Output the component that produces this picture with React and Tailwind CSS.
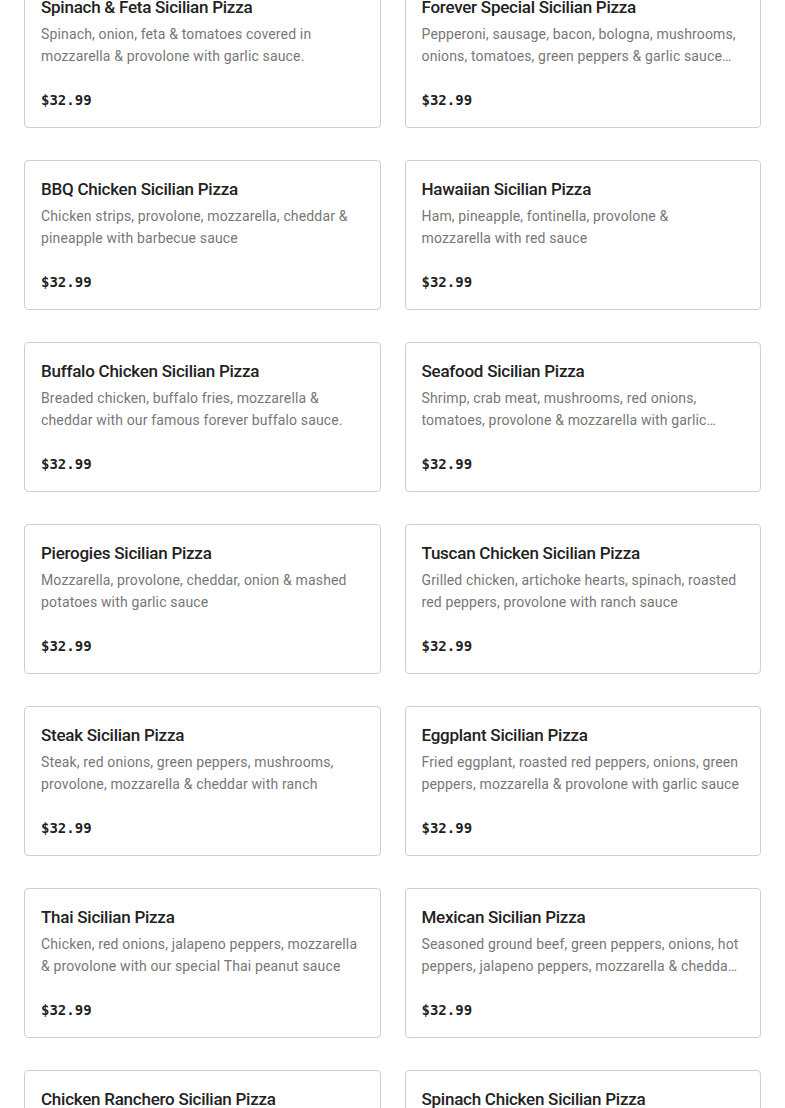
const pizzas = [
  {
    name: "Spinach & Feta Sicilian Pizza",
    desc: "Spinach, onion, feta & tomatoes covered in mozzarella & provolone with garlic sauce.",
  },
  {
    name: "Forever Special Sicilian Pizza",
    desc: "Pepperoni, sausage, bacon, bologna, mushrooms, onions, tomatoes, green peppers & garlic sauce topped with mozzarella & provolone",
  },
  {
    name: "BBQ Chicken Sicilian Pizza",
    desc: "Chicken strips, provolone, mozzarella, cheddar & pineapple with barbecue sauce",
  },
  {
    name: "Hawaiian Sicilian Pizza",
    desc: "Ham, pineapple, fontinella, provolone & mozzarella with red sauce",
  },
  {
    name: "Buffalo Chicken Sicilian Pizza",
    desc: "Breaded chicken, buffalo fries, mozzarella & cheddar with our famous forever buffalo sauce.",
  },
  {
    name: "Seafood Sicilian Pizza",
    desc: "Shrimp, crab meat, mushrooms, red onions, tomatoes, provolone & mozzarella with garlic sauce",
  },
  {
    name: "Pierogies Sicilian Pizza",
    desc: "Mozzarella, provolone, cheddar, onion & mashed potatoes with garlic sauce",
  },
  {
    name: "Tuscan Chicken Sicilian Pizza",
    desc: "Grilled chicken, artichoke hearts, spinach, roasted red peppers, provolone with ranch sauce",
  },
  {
    name: "Steak Sicilian Pizza",
    desc: "Steak, red onions, green peppers, mushrooms, provolone, mozzarella & cheddar with ranch",
  },
  {
    name: "Eggplant Sicilian Pizza",
    desc: "Fried eggplant, roasted red peppers, onions, green peppers, mozzarella & provolone with garlic sauce",
  },
  {
    name: "Thai Sicilian Pizza",
    desc: "Chicken, red onions, jalapeno peppers, mozzarella & provolone with our special Thai peanut sauce",
  },
  {
    name: "Mexican Sicilian Pizza",
    desc: "Seasoned ground beef, green peppers, onions, hot peppers, jalapeno peppers, mozzarella & cheddar with salsa",
  },
  {
    name: "Chicken Ranchero Sicilian Pizza",
    desc: "Chicken, bacon, onions, tomatoes, mozzarella & cheddar with ranch sauce",
  },
  {
    name: "Spinach Chicken Sicilian Pizza",
    desc: "Chicken, spinach, tomatoes, mozzarella & provolone with garlic sauce",
  },
];

function MenuCard({ item }) {
  return (
    <div className="h-[150px] rounded-[4px] border border-[#cfcfcf] bg-white pl-4 pr-5 pt-4 pb-4">
      <h3 className="text-[17px] leading-6 font-medium text-[#222] tracking-[-0.25px] whitespace-nowrap">
        {item.name}
      </h3>
      <p className="mt-[4px] h-[44px] text-[14px] leading-[22px] text-[#777] tracking-[0.15px] line-clamp-2">
        {item.desc}
      </p>
      <p className="mt-[22px] text-[14px] leading-[22px] font-bold text-[#222] font-['DejaVu_Sans_Mono',monospace]">
        $32.99
      </p>
    </div>
  );
}

export default function App() {
  return (
    <div className="h-[1108px] overflow-hidden bg-white font-['Roboto',sans-serif]">
      <div className="-mt-[22px] grid grid-cols-2 gap-x-6 gap-y-8 px-6">
        {pizzas.map((p) => (
          <MenuCard key={p.name} item={p} />
        ))}
      </div>
    </div>
  );
}
